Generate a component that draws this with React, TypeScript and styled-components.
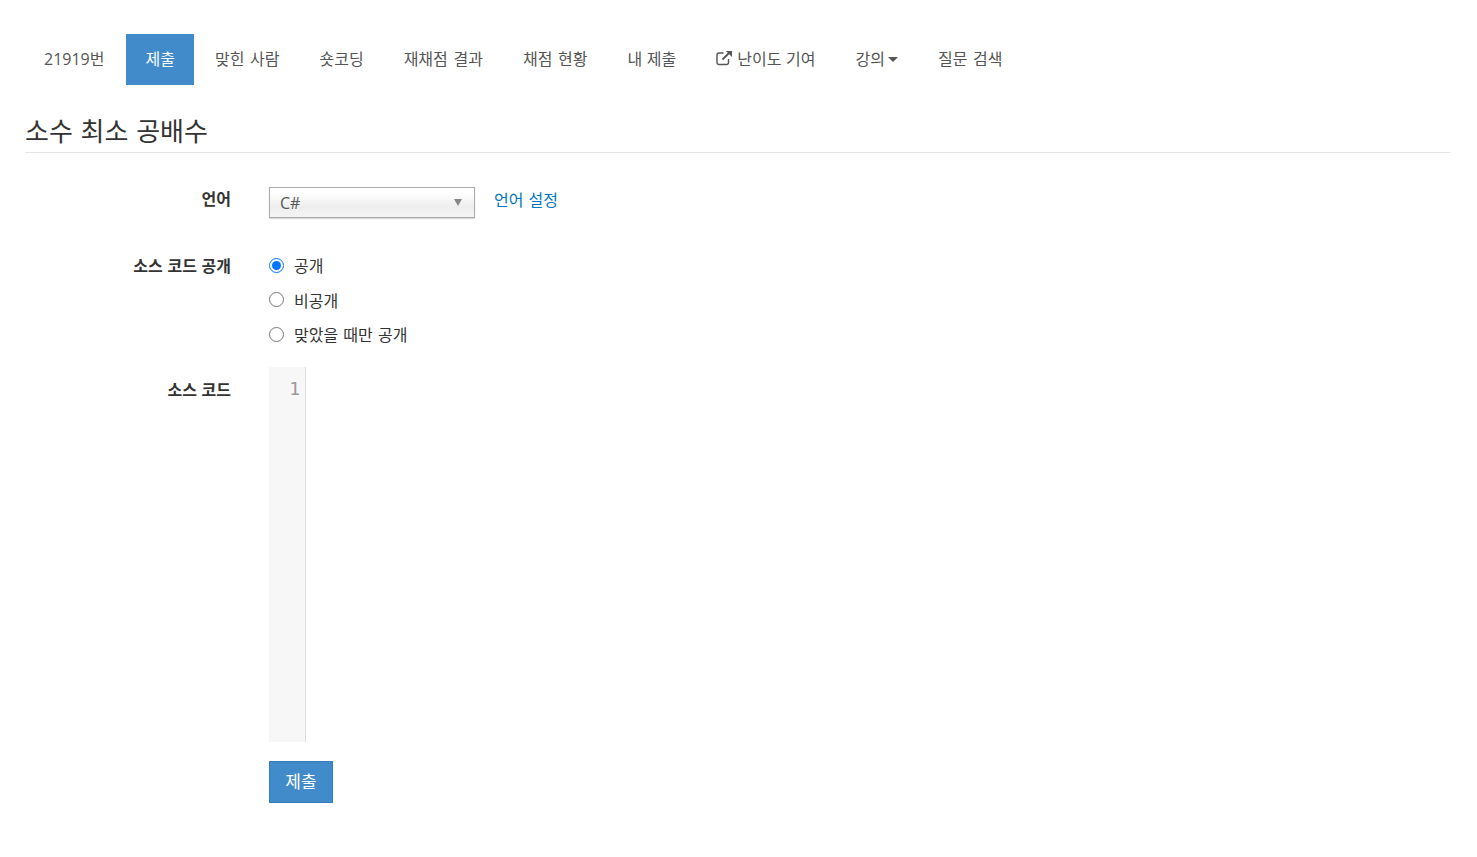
import React from 'react'
import styled, { createGlobalStyle } from 'styled-components'

const GlobalStyle = createGlobalStyle`
    * {
        box-sizing: border-box;
    }
    body {
        margin: 0;
        background: #fff;
        color: #333;
        font-family: 'Open Sans', 'Noto Sans CJK KR', sans-serif;
        font-size: 16px;
    }
`

const Page = styled.div`
    padding: 34px 27px 0 25px;
    height: 857px;
    overflow: hidden;
`

const Nav = styled.ul`
    display: flex;
    list-style: none;
    margin: 0 0 0 -1px;
    padding: 0;
    height: 51px;
`

const NavItem = styled.li<{ $active?: boolean; $end?: number; $tight?: boolean }>`
    display: flex;
    align-items: center;
    gap: 5px;
    margin-right: ${p => (p.$active ? 1 : 0)}px;
    padding: 0 ${p => p.$end ?? 20}px 4px ${p => (p.$active ? 19 : 20)}px;
    font-size: 16px;
    word-spacing: ${p => (p.$tight ? 0.5 : 1.5)}px;
    color: ${p => (p.$active ? '#fff' : '#555')};
    background: ${p => (p.$active ? '#428bca' : 'transparent')};
`

const Caret = styled.span`
    width: 0;
    height: 0;
    margin: 4px 0 0 -2px;
    border-top: 5px solid #555;
    border-left: 5px solid transparent;
    border-right: 5px solid transparent;
`

const Title = styled.h1`
    margin: 29px 0 34px;
    padding-bottom: 3px;
    border-bottom: 1px solid #e5e5e5;
    font-size: 26px;
    font-weight: 400;
    line-height: 35px;
    word-spacing: 1px;
    color: #333;
`

const Form = styled.form`
    display: grid;
    grid-template-columns: 206px 1fr;
    column-gap: 38px;
`

const Label = styled.label<{ $top: number }>`
    padding-top: ${p => p.$top}px;
    font-size: 16px;
    font-weight: 700;
    line-height: 20px;
    word-spacing: 0.5px;
    text-align: right;
    color: #333;
`

const LanguageRow = styled.div`
    display: flex;
    align-items: flex-start;
    gap: 19px;
    margin-bottom: 37px;
`

const SelectBox = styled.div`
    position: relative;
    width: 206px;
    height: 31px;
    padding: 5px 10px;
    border: 1px solid #aaa;
    box-shadow: 0 1px 1px rgba(0, 0, 0, 0.15);
    background: linear-gradient(#fff 15%, #eee 65%, #f4f4f4);
    font-size: 16px;
    line-height: 20px;
    color: #555;
`

const SelectArrow = styled.span`
    position: absolute;
    top: 11px;
    right: 12px;
    border-top: 7px solid #888;
    border-left: 4.5px solid transparent;
    border-right: 4.5px solid transparent;
`

const TextLink = styled.a`
    padding-top: 3px;
    font-size: 16px;
    line-height: 20px;
    word-spacing: 1px;
    color: #0076c0;
`

const RadioGroup = styled.div`
    display: flex;
    flex-direction: column;
    gap: 14px;
    margin-bottom: 22px;
`

const RadioRow = styled.label`
    display: flex;
    align-items: center;
    gap: 10px;
    height: 20.5px;
    font-size: 16px;
    word-spacing: 1px;
    color: #333;

    input {
        width: 15px;
        height: 15px;
        margin: 0;
    }
`

const Editor = styled.div`
    height: 375px;
    margin-bottom: 19px;
`

const Gutter = styled.div`
    width: 37px;
    height: 100%;
    padding: 12px 5px 0 0;
    background: #f7f7f7;
    border-right: 1px solid #ddd;
    font-family: 'DejaVu Sans Mono', monospace;
    font-size: 18px;
    line-height: 20px;
    text-align: right;
    color: #999;
`

const SubmitButton = styled.button`
    width: 64px;
    height: 42px;
    padding: 0 0 2px;
    border: 1px solid #357ebd;
    background: #428bca;
    color: #fff;
    font-family: inherit;
    font-size: 17px;
`

const navItems = ['맞힌 사람', '숏코딩', '재채점 결과', '채점 현황']

const ExternalIcon: React.FC = () => (
    <svg width="16" height="16" viewBox="0 0 16 16" fill="none" stroke="#555" strokeWidth="1.4">
        <path d="M12.5 9v3.5a2 2 0 0 1-2 2H3a2 2 0 0 1-2-2V5a2 2 0 0 1 2-2h4.5" />
        <path d="M6.5 9.5 14 2" strokeWidth="1.8" />
        <path d="M10 1h6v6z" fill="#555" stroke="none" />
    </svg>
)

const App: React.FC = () => {
    return (
        <Page>
            <GlobalStyle />
            <Nav>
                <NavItem $end={22}>21919번</NavItem>
                <NavItem $active $end={19}>제출</NavItem>
                {navItems.map(item => <NavItem key={item}>{item}</NavItem>)}
                <NavItem $tight>내 제출</NavItem>
                <NavItem $tight><ExternalIcon />난이도 기여</NavItem>
                <NavItem>강의<Caret /></NavItem>
                <NavItem>질문 검색</NavItem>
            </Nav>
            <Title>소수 최소 공배수</Title>
            <Form>
                <Label $top={2}>언어</Label>
                <LanguageRow>
                    <SelectBox>C#<SelectArrow /></SelectBox>
                    <TextLink>언어 설정</TextLink>
                </LanguageRow>
                <Label $top={1}>소스 코드 공개</Label>
                <RadioGroup>
                    <RadioRow><input type="radio" name="open" defaultChecked />공개</RadioRow>
                    <RadioRow><input type="radio" name="open" />비공개</RadioRow>
                    <RadioRow><input type="radio" name="open" />맞았을 때만 공개</RadioRow>
                </RadioGroup>
                <Label $top={13}>소스 코드</Label>
                <Editor><Gutter>1</Gutter></Editor>
                <span />
                <div><SubmitButton type="button">제출</SubmitButton></div>
            </Form>
        </Page>
    )
}

export default App
